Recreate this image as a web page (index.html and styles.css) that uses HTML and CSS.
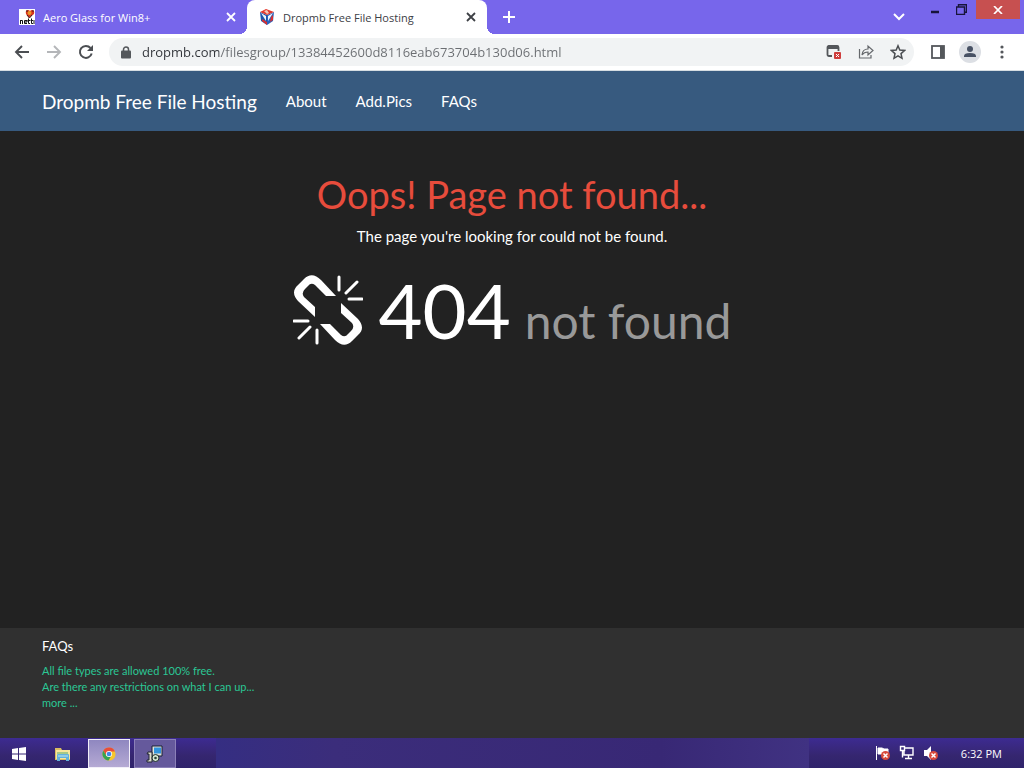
FILE: index.html
```html
<!DOCTYPE html>
<html lang="en">
<head>
<meta charset="utf-8">
<meta name="viewport" content="width=device-width, initial-scale=1">
<title>Dropmb Free File Hosting</title>
<link rel="stylesheet" href="styles.css">
</head>
<body class="desktop">
<header class="browser">
  <div class="tabstrip">
    <div class="tab">
      <svg class="favicon" viewBox="0 0 16 16" aria-hidden="true"><rect width="16" height="16" fill="#fff"/><path d="M10 9 7 5q-1-4 2-4 1 0 2 1 1-1 2-1 3 0 2 4z" fill="#d8321c"/><circle cx="10.500" cy="4" r="2" fill="#e99a2a"/><path d="M7 2h2M13 2h2M8 6l2.500 3L13 6" stroke="#422" fill="none"/><path d="M1.500 15v-4M1.500 11.500h2V15M5 13h3v-1.500H5.500V14.500H8M9.500 9.500v5h1.500M8.500 11.500H11M12.500 9.500v5H14M11.500 11.500H14M15 11v4" stroke="#111" fill="none"/></svg>
      <span class="tab-title">Aero Glass for Win8+</span>
      <button class="tab-close" aria-label="Close Aero Glass tab"><svg width="10" height="10" viewBox="0 0 10 10"><path d="m1 1 8 8M9 1 1 9" stroke="currentColor" stroke-width="1.800"/></svg></button>
    </div>
    <div class="tab tab-active">
      <svg class="favicon" viewBox="0 0 16 16" aria-hidden="true"><path d="M1 3 8 6v10l-6-4z" fill="#1d55ad"/><path d="m8 6 7-3-1 9-6 4z" fill="#2762bd"/><path d="m1 3 6-3 8 3-7 3z" fill="#e3382d"/><path d="m2 4 5 3v5zM9 7l5-3-5 8z" fill="#f2f5fb"/><path d="m3 10 5 3v3l-5-4zM12 8l2-2v5l-3 2z" fill="#d62f31"/><path d="m5 2 3-1 2 3-2 1z" fill="#f3c5b5"/></svg>
      <span class="tab-title">Dropmb Free File Hosting</span>
      <button class="tab-close" aria-label="Close Dropmb tab"><svg width="10" height="10" viewBox="0 0 10 10"><path d="m1 1 8 8M9 1 1 9" stroke="currentColor" stroke-width="1.800"/></svg></button>
    </div>
    <button class="new-tab" aria-label="New tab"><svg width="12" height="12" viewBox="0 0 12 12"><path d="M6 0v12M0 6h12" stroke="#fff" stroke-width="2"/></svg></button>
    <button class="tab-search" aria-label="Search tabs"><svg width="12" height="8" viewBox="0 0 12 8"><path d="m1 1 5 5 5-5" fill="none" stroke="#fff" stroke-width="2"/></svg></button>
    <div class="window-controls">
      <button class="win" aria-label="Minimize"><svg width="10" height="12" viewBox="0 0 10 12"><path d="M1 8h8" stroke="#17143a" stroke-width="2.500"/></svg></button>
      <button class="win" aria-label="Restore"><svg width="11" height="11" viewBox="0 0 11 11"><path d="M.5 3h8v7.500h-8zM2.500 3V.7h8v7.500h-2" fill="none" stroke="#17143a" stroke-width="1.400"/></svg></button>
      <button class="win win-close" aria-label="Close window"><svg width="10" height="8" viewBox="0 0 10 8"><path d="m1 0 8 8M9 0 1 8" stroke="#fff" stroke-width="1.700"/></svg></button>
    </div>
  </div>
  <div class="toolbar">
    <button class="tool" aria-label="Back"><svg width="16" height="16" viewBox="0 0 16 16"><path d="M15 8H2m6-6L2 8l6 6" fill="none" stroke="#4b4e52" stroke-width="1.900"/></svg></button>
    <button class="tool" aria-label="Forward"><svg width="16" height="16" viewBox="0 0 16 16"><path d="M1 8h13M8 2l6 6-6 6" fill="none" stroke="#b4b6b9" stroke-width="1.900"/></svg></button>
    <button class="tool" aria-label="Reload"><svg width="16" height="16" viewBox="0 0 16 16"><path d="M13.700 9.500A6 6 0 1 1 12.500 4" fill="none" stroke="#4b4e52" stroke-width="2"/><path d="M15 1v6H9z" fill="#4b4e52"/></svg></button>
    <div class="omnibox">
      <svg width="10" height="13" viewBox="0 0 10 13" aria-hidden="true"><path d="M2.500 6V3.500a2.500 2.500 0 0 1 5 0V6" fill="none" stroke="#54575b" stroke-width="1.500"/><rect y="4.500" width="10" height="8" rx="1" fill="#54575b"/></svg>
      <input class="address" type="text" aria-label="Address" value="dropmb.com/filesgroup/13384452600d8116eab673704b130d06.html">
      <button class="tool" aria-label="Popup blocked"><svg width="16" height="16" viewBox="0 0 16 16"><path d="M6 12H3q-1.500 0-1.500-1.500V3.500Q1.500 2 3 2h8q1.500 0 1.500 1.500V7" fill="none" stroke="#54575b" stroke-width="1.800"/><path d="M2 1.500h10V5H2z" fill="#54575b"/><rect x="8" y="8" width="7" height="7" rx="1" fill="#cf3d3c"/><path d="m10 10 3 3m0-3-3 3" stroke="#fff"/></svg></button>
      <button class="tool" aria-label="Share"><svg width="16" height="16" viewBox="0 0 16 16"><path d="M1.500 5v9H13v-3M4 11q.5-6 6-6V2l5 4.500-5 4.500V8Q6 8 4 11z" fill="none" stroke="#65686c" stroke-width="1.200"/></svg></button>
      <button class="tool" aria-label="Bookmark"><svg width="16" height="16" viewBox="0 0 16 16"><path d="m8 1.800 1.800 4.300 4.700.4-3.500 3.100 1 4.700-4-2.500-4 2.500 1-4.700L1.500 6.500l4.700-.4z" fill="none" stroke="#4b4e52" stroke-width="1.500"/></svg></button>
    </div>
    <button class="tool" aria-label="Side panel"><svg width="16" height="16" viewBox="0 0 16 16"><rect x="2" y="2" width="12" height="12" fill="none" stroke="#54575b" stroke-width="1.800"/><path d="M10 2h4v12h-4z" fill="#54575b"/></svg></button>
    <button class="tool" aria-label="Profile"><svg width="22" height="22" viewBox="0 0 22 22"><circle cx="11" cy="11" r="11" fill="#dcdfe4"/><circle cx="11" cy="8" r="3" fill="#485264"/><path d="M5 16v-1q0-3 6-3t6 3v1z" fill="#485264"/></svg></button>
    <button class="tool" aria-label="Menu"><svg width="4" height="14" viewBox="0 0 4 14"><g fill="#54575b"><circle cx="2" cy="2" r="1.600"/><circle cx="2" cy="7" r="1.600"/><circle cx="2" cy="12" r="1.600"/></g></svg></button>
  </div>
</header>
<div class="site">
  <nav class="navbar">
    <a class="brand" href="#">Dropmb Free File Hosting</a>
    <a class="nav-link" href="#">About</a>
    <a class="nav-link" href="#">Add.Pics</a>
    <a class="nav-link" href="#">FAQs</a>
  </nav>
  <main class="error">
    <h1 class="error-title">Oops! Page not found...</h1>
    <p class="error-text">The page you're looking for could not be found.</p>
    <div class="error-code">
      <svg class="broken-link" viewBox="0 0 70 70" aria-hidden="true"><path d="M46 2v13M64 7 53 18M56 24h13M24 68V55M6 63 17 52M1 46h14" fill="none" stroke="#fff" stroke-width="3" stroke-linecap="round"/><g fill="#fff"><path id="half" d="M43 21H33L22 10Q18 7 15 11L12 14Q8 18 11 22L22 32V42L5 26Q-3 17 5 10L11 4Q19-4 28 5z"/><use href="#half" transform="rotate(180 35 35)"/></g></svg>
      <span class="code">404</span>
      <span class="code-text">not found</span>
    </div>
  </main>
  <footer class="footer">
    <h2 class="footer-title">FAQs</h2>
    <a class="footer-link" href="#">All file types are allowed 100% free.</a>
    <a class="footer-link" href="#">Are there any restrictions on what I can up...</a>
    <a class="footer-link" href="#">more ...</a>
  </footer>
</div>
<div class="taskbar">
  <button class="task start" aria-label="Start"><svg width="14" height="14" viewBox="0 0 14 14"><path d="m0 2 6-1v5.500H0zM7 .9 14 0v6.500H7zM0 7.500h6V13l-6-1zM7 7.500h7V14l-7-1z" fill="#fff"/></svg></button>
  <button class="task" aria-label="File Explorer"><svg width="18" height="16" viewBox="0 0 18 16"><path d="M1 2h6l1 2h8v10H1z" fill="#d9bd62"/><path d="M2 4h14v9H2z" fill="#f7e69b"/><path d="M3 8V6h11v2" fill="#a5c887"/><path d="M3 15V9q0-1 1-1h10q1 0 1 1v6h-3v-3H6v3z" fill="#62b2dd"/><path d="M4 10h10" stroke="#bce6ef"/></svg></button>
  <button class="task task-active" aria-label="Google Chrome"><svg width="14" height="14" viewBox="0 0 16 16"><circle cx="8" cy="8" r="7.500" fill="#f6c72e"/><path d="M1.500 4.200A7.500 7.500 0 0 1 14.800 5H8L4.700 9.500z" fill="#e84d3c"/><path d="M1.500 4.200 5 10l5 1-2.500 4.500A7.500 7.500 0 0 1 1.500 4.200" fill="#36a353"/><circle cx="8" cy="8" r="3.500" fill="#fff"/><circle cx="8" cy="8" r="2.700" fill="#4287e8"/></svg></button>
  <button class="task task-open" aria-label="Installer"><svg width="18" height="18" viewBox="0 0 18 18"><path d="M6 1h10v10H6z" fill="#e3e3dc" stroke="#182032"/><path d="M8 2.500h7v6H8z" fill="#3195dd"/><path d="M2 7h4v10H1v-2h2V9H1z" fill="#dcdccc" stroke="#202432"/><circle cx="9.500" cy="13" r="3.500" fill="#d5e6d2" stroke="#20312b"/><circle cx="9.500" cy="13" r="1.300" fill="#29423b"/></svg></button>
  <div class="wallpaper" aria-hidden="true"></div>
  <div class="tray">
    <button class="tray-item" aria-label="Action Center"><svg width="16" height="16" viewBox="0 0 16 16"><path d="M1.500 1v14M3 3h4l2 1h4v6H9L7 9H3z" stroke="#fff" fill="#fff"/><circle cx="10.500" cy="10.500" r="4.500" fill="#d84a3c"/><path d="m8.500 8.500 4 4m0-4-4 4" stroke="#fff" stroke-width="1.500"/></svg></button>
    <button class="tray-item" aria-label="Network"><svg width="16" height="16" viewBox="0 0 16 16"><path d="M6 3h8v7H5V6M9.500 10v3M6 13.500h7M1.500 1.500h4v4h-4zM3.500 5.500v7" fill="none" stroke="#fff" stroke-width="1.400"/></svg></button>
    <button class="tray-item" aria-label="Volume muted"><svg width="16" height="16" viewBox="0 0 16 16"><path d="M1 5h3l4-4v14l-4-4H1z" fill="#fff"/><circle cx="10.500" cy="10.500" r="4.500" fill="#d84a3c"/><path d="m8.500 8.500 4 4m0-4-4 4" stroke="#fff" stroke-width="1.500"/></svg></button>
    <time class="clock">6:32 PM</time>
  </div>
</div>
</body>
</html>
```
FILE: styles.css
```css
* { box-sizing: border-box; }
body, h1, h2, p { margin: 0; font-weight: 400; }
button { padding: 0; border: 0; background: none; display: flex; align-items: center; justify-content: center; }
svg { flex: none; display: block; }
a { text-decoration: none; }

.desktop {
  min-height: 100vh;
  display: flex;
  flex-direction: column;
  font-family: "Open Sans", "Noto Sans", sans-serif;
  background: #222;
}

.tabstrip { display: flex; height: 34px; background: #7766eb; padding: 0 4px 0 7px; }
.tab { display: flex; align-items: center; width: 240px; padding: 0 10px 0 12px; color: #fff; font-size: 11px; }
.tab-active {
  position: relative;
  background: #fff;
  color: #3d4045;
  border-radius: 8px 8px 0 0;
}
.tab-active::before, .tab-active::after {
  content: "";
  position: absolute;
  bottom: 0;
  width: 8px;
  height: 8px;
}
.tab-active::before { right: 100%; background: radial-gradient(circle at 0 0, #7766eb 8px, #fff 8px); }
.tab-active::after { left: 100%; background: radial-gradient(circle at 100% 0, #7766eb 8px, #fff 8px); }
.favicon { width: 16px; height: 16px; }
.tab-title { flex: 1; margin-left: 8px; white-space: nowrap; }
.tab-close { width: 12px; height: 16px; color: inherit; }
.new-tab { width: 44px; }
.tab-search { width: 28px; margin-left: auto; }
.window-controls { display: flex; margin-left: 9px; }
.win { width: 26px; height: 19px; }
.win-close { width: 44px; margin-left: 2px; background: #c75050; }

.toolbar { display: flex; align-items: center; height: 37px; padding: 0 6px; background: #fff; border-bottom: 1px solid #d5dde2; }
.tool { width: 32px; height: 28px; }
.omnibox {
  flex: 1;
  display: flex;
  align-items: center;
  height: 28px;
  margin: 0 8px 0 7px;
  padding-left: 12px;
  border-radius: 14px;
  background: #f1f3f4;
}
.address {
  flex: 1;
  min-width: 0;
  margin-left: 11px;
  padding: 0;
  border: 0;
  font: 13px/20px "Open Sans", "Noto Sans", sans-serif;
  color: transparent;
  background: linear-gradient(to right, #303338 77px, #6b6e72 77px);
  -webkit-background-clip: text;
  background-clip: text;
}

.site { flex: 1; display: flex; flex-direction: column; font-family: Lato, sans-serif; color: #fff; }
.navbar { display: flex; align-items: center; gap: 29px; height: 60px; padding: 0 42px; background: #375a7f; }
.brand { font-size: 19px; color: #fff; }
.nav-link { font-size: 15px; color: #fff; }
.error { flex: 1; padding-top: 40px; text-align: center; }
.error-title { font-size: 38px; line-height: 46px; color: #e74c3c; }
.error-text { margin-top: 8px; font-size: 15px; line-height: 22px; }
.error-code { display: flex; justify-content: center; align-items: baseline; margin-top: 18px; line-height: 90px; }
.broken-link { align-self: flex-start; width: 70px; height: 70px; margin: 10px 16px 0 0; }
.code { font-size: 76px; }
.code-text { margin-left: 14px; font-size: 48px; color: #999; }
.footer { display: flex; flex-direction: column; align-items: flex-start; padding: 8px 42px 27px; background: #303030; }
.footer-title { margin-bottom: 7px; font-size: 13px; line-height: 20px; }
.footer-link { font-size: 11px; line-height: 16px; color: #2bc795; }

.taskbar { display: flex; height: 30px; padding-left: 2px; background: linear-gradient(#3d2b91, #35266f 60%, #2f236b); }
.task { width: 42px; height: 29px; margin: 1px 4px 0 0; }
.start { width: 34px; margin-right: 6px; }
.task-active { border: 1px solid #f1eef8; background: linear-gradient(#8f87c0, #b5aad4); }
.task-open { border: 1px solid #8b80b8; background: #65599c; }
.wallpaper { flex: 1; margin: 0 66px 0 36px; background: linear-gradient(to right, #352e82, #3b2d7b 20%, #382875 75%, #403282); }
.tray { display: flex; align-items: center; gap: 8px; padding-right: 22px; }
.clock { margin-left: 14px; font-size: 11px; color: #fff; }
```
